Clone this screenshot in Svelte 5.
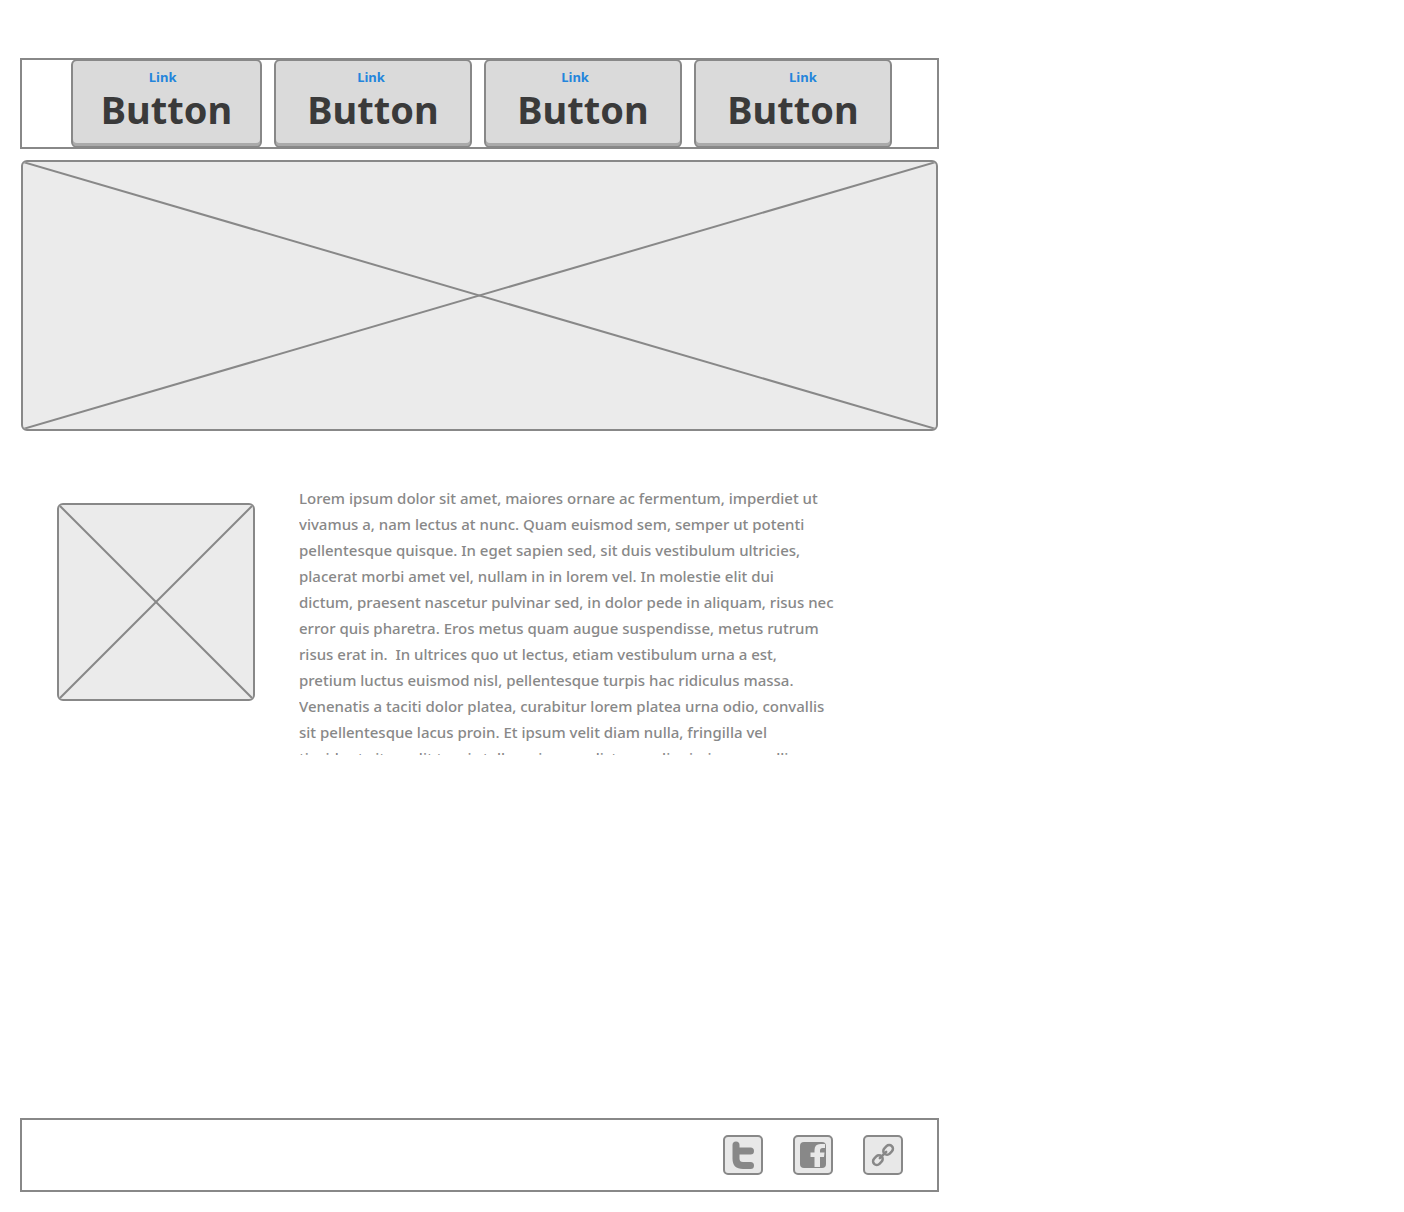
<script>
  const items = [
    { id: 'one', x: 48 },
    { id: 'two', x: 49 },
    { id: 'three', x: 46 },
    { id: 'four', x: 55 }
  ];
  const lines = [
    'Lorem ipsum dolor sit amet, maiores ornare ac fermentum, imperdiet ut',
    'vivamus a, nam lectus at nunc. Quam euismod sem, semper ut potenti',
    'pellentesque quisque. In eget sapien sed, sit duis vestibulum ultricies,',
    'placerat morbi amet vel, nullam in in lorem vel. In molestie elit dui',
    'dictum, praesent nascetur pulvinar sed, in dolor pede in aliquam, risus nec',
    'error quis pharetra. Eros metus quam augue suspendisse, metus rutrum',
    'risus erat in.  In ultrices quo ut lectus, etiam vestibulum urna a est,',
    'pretium luctus euismod nisl, pellentesque turpis hac ridiculus massa.',
    'Venenatis a taciti dolor platea, curabitur lorem platea urna odio, convallis',
    'sit pellentesque lacus proin. Et ipsum velit diam nulla, fringilla vel',
    'tincidunt vitae, elit turpis tellus a ipsum, dictum a dignissim, convallis'
  ];
</script>

{#snippet cross()}
  <svg width="100%" height="100%" aria-hidden="true">
    <line x1="0" y1="0" x2="100%" y2="100%" />
    <line x1="100%" y1="0" x2="0" y2="100%" />
  </svg>
{/snippet}

<div class="page">
  <nav class="bar menu" aria-label="Main">
    {#each items as item (item.id)}
      <div class="item">
        <button type="button">Button</button>
        <a href="#{item.id}" style="left: {item.x}%">Link</a>
      </div>
    {/each}
  </nav>

  <main>
    <div class="placeholder banner" role="img" aria-label="Banner placeholder">{@render cross()}</div>
    <section class="article">
      <div class="placeholder thumb" role="img" aria-label="Image placeholder">{@render cross()}</div>
      <p>{lines.join('\n')}</p>
    </section>
  </main>

  <footer class="bar social">
    <a href="#twitter" aria-label="Twitter">
      <svg viewBox="0 0 36 36" aria-hidden="true">
        <path d="M11 8V21.500Q11 28.500 18 28.500H25.500M11 14H25.500" fill="none" stroke="#888" stroke-width="7" stroke-linecap="round" stroke-linejoin="round" />
      </svg>
    </a>
    <a href="#facebook" aria-label="Facebook">
      <svg viewBox="0 0 36 36" aria-hidden="true">
        <rect x="5" y="5" width="26" height="26" rx="4" fill="#888" />
        <path d="M19.500 30V20H15.500V15.500H19.500V13Q19.500 7 25.500 7H30V11H27.500Q25 11 25 13.500V15.500H29.500L29 20H25V30Z" fill="#e8e8e8" />
      </svg>
    </a>
    <a href="#share" aria-label="Share link">
      <svg viewBox="0 0 36 36" aria-hidden="true">
        <g transform="rotate(-45 18 18)" fill="none" stroke="#888" stroke-width="2.500">
          <rect x="5.500" y="14.250" width="10.500" height="7.500" rx="3.750" />
          <rect x="20" y="14.250" width="10.500" height="7.500" rx="3.750" />
          <path d="M13.500 18H22.500" stroke-linecap="round" />
        </g>
      </svg>
    </a>
  </footer>
</div>

<style>
  :global(body) {
    background: #fff;
  }
  .page {
    box-sizing: border-box;
    display: flex;
    flex-direction: column;
    min-height: 100vh;
    max-width: 959px;
    padding: 58px 20px 20px;
    font-family: "Noto Sans", sans-serif;
    color: #888;
  }
  .bar {
    border: 2px solid #888;
  }
  .menu {
    display: grid;
    grid-template-columns: 191fr 198fr 198fr 198fr;
    gap: 12px;
    padding: 0 45px 0 49px;
  }
  .item {
    position: relative;
    margin: -1px 0;
  }
  .item button {
    display: block;
    box-sizing: border-box;
    width: 100%;
    height: 89px;
    padding: 10px 0 0;
    border: 2px solid #888;
    border-radius: 6px;
    background: #dadada;
    box-shadow: inset 0 -3px #aaa;
    color: #3a3a3a;
    font: 700 38px/56px "Noto Sans", sans-serif;
  }
  .item a {
    position: absolute;
    top: 8px;
    transform: translateX(-50%);
    color: #2385dc;
    font-size: 13px;
    font-weight: 700;
    line-height: 20px;
    text-decoration: none;
  }
  main {
    flex: 1;
  }
  .placeholder {
    box-sizing: border-box;
    border: 2px solid #888;
    border-radius: 6px;
    background: #ebebeb;
    overflow: hidden;
  }
  .placeholder svg {
    display: block;
    stroke: #888;
    stroke-width: 2;
  }
  .banner {
    height: 271px;
    margin: 11px 1px 0;
  }
  .article {
    display: flex;
    align-items: flex-start;
    gap: 44px;
    padding: 54px 37px 0;
  }
  .thumb {
    flex: none;
    width: 198px;
    height: 198px;
    margin-top: 18px;
  }
  p {
    max-height: 270px;
    margin: 0;
    overflow: hidden;
    font-size: 15px;
    font-weight: 500;
    line-height: 26px;
    white-space: pre;
  }
  .social {
    display: flex;
    justify-content: flex-end;
    gap: 30px;
    padding: 15px 34px;
  }
  .social a {
    border: 2px solid #888;
    border-radius: 5px;
    background: #e8e8e8;
  }
  .social svg {
    display: block;
    width: 36px;
    height: 36px;
  }
</style>
